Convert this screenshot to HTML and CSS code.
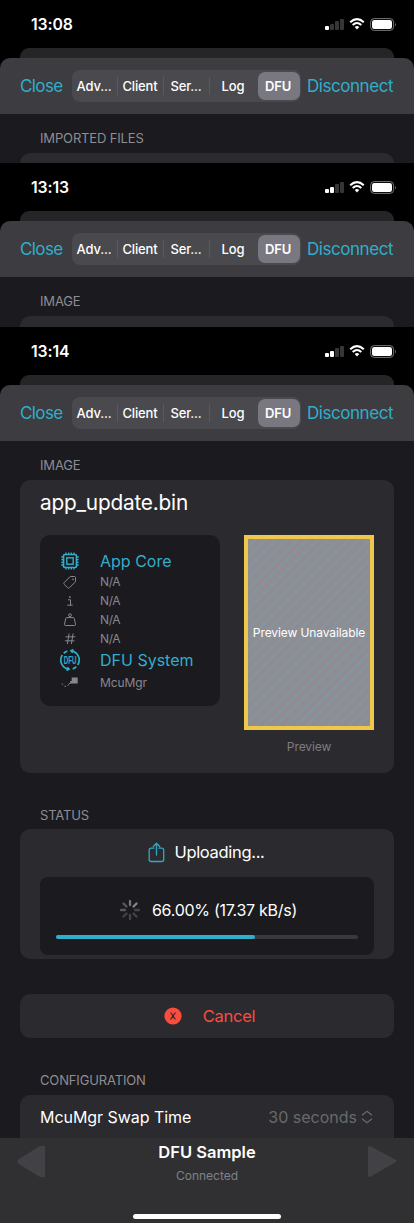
FILE: index.html
```html
<!DOCTYPE html>
<html lang="en">
<head>
<meta charset="utf-8">
<title>DFU Sample</title>
<link rel="stylesheet" href="styles.css">
</head>
<body>
<svg class="defs" width="0" height="0">
  <symbol id="wifi" viewBox="0 0 16 12"><g fill="none" stroke="#fff" stroke-width="2.1"><path d="M1.2 4.3Q8-2 14.8 4.3"/><path d="M3.7 7Q8 3 12.3 7"/></g><path d="M5.7 9Q8 7.2 10.3 9L8 11.5Z" fill="#fff"/></symbol>
  <symbol id="battery" viewBox="0 0 27 13"><rect x=".6" y=".6" width="23" height="11.8" rx="3.6" fill="none" stroke="#777"/><rect x="2" y="2" width="20" height="9" rx="2.3" fill="#fff"/><path d="M25 4.5q1.6 2 0 4z" fill="#777"/></symbol>
</svg>
<main class="page">
  <section class="phone short first">
    <header class="status"><time>13:08</time><div class="indicators"><span class="bars"><i class="on"></i><i></i><i></i><i></i></span><svg class="wifi"><use href="#wifi"/></svg><svg class="battery"><use href="#battery"/></svg></div></header>
    <div class="backsheet"></div>
    <nav class="nav"><a class="close">Close</a><div class="segments"><span>Adv...</span><span>Client</span><span>Ser...</span><span>Log</span><span class="selected">DFU</span></div><a class="disconnect">Disconnect</a></nav>
    <h2 class="label imported">IMPORTED FILES</h2>
    <div class="card peek"></div>
  </section>
  <section class="phone short second">
    <header class="status"><time>13:13</time><div class="indicators"><span class="bars"><i class="on"></i><i class="on"></i><i></i><i></i></span><svg class="wifi"><use href="#wifi"/></svg><svg class="battery"><use href="#battery"/></svg></div></header>
    <div class="backsheet"></div>
    <nav class="nav"><a class="close">Close</a><div class="segments"><span>Adv...</span><span>Client</span><span>Ser...</span><span>Log</span><span class="selected">DFU</span></div><a class="disconnect">Disconnect</a></nav>
    <h2 class="label">IMAGE</h2>
    <div class="card peek"></div>
  </section>
  <section class="phone full">
    <header class="status"><time>13:14</time><div class="indicators"><span class="bars"><i class="on"></i><i class="on"></i><i></i><i></i></span><svg class="wifi"><use href="#wifi"/></svg><svg class="battery"><use href="#battery"/></svg></div></header>
    <div class="backsheet"></div>
    <nav class="nav"><a class="close">Close</a><div class="segments"><span>Adv...</span><span>Client</span><span>Ser...</span><span>Log</span><span class="selected">DFU</span></div><a class="disconnect">Disconnect</a></nav>
    <h2 class="label">IMAGE</h2>
    <div class="card image-card">
      <h1 class="filename">app_update.bin</h1>
      <div class="image-row">
        <ul class="details">
          <li class="major"><svg width="20" height="20" viewBox="0 0 20 20" fill="none" stroke="currentColor"><rect x="3.5" y="3.5" width="13" height="13" rx="1.5" stroke-width="1.7"/><rect x="6.8" y="6.8" width="6.4" height="6.4" stroke-width="1.4"/><path d="M6 1.5V3M8.7 1.5V3M11.3 1.5V3M14 1.5V3M6 17v1.5M8.7 17v1.5M11.3 17v1.5M14 17v1.5M1.3 6H3M1.3 8.7H3M1.3 11.3H3M1.3 14H3M17 6h1.7M17 8.7h1.7M17 11.3h1.7M17 14h1.7" stroke-width="1.3"/></svg><span class="core">App Core</span></li>
          <li><svg width="16" height="16" viewBox="0 0 16 16" fill="none" stroke="currentColor"><path d="M8.3 2.5 2.3 8.4q-1 1 0 2l3.2 3.2q1 1 2 0l6-5.8V3.500q0-1-1-1Z" stroke-linejoin="round"/><circle cx="11" cy="5.3" r=".5"/></svg><span>N/A</span></li>
          <li><svg width="16" height="16" viewBox="0 0 16 16" fill="none" stroke="currentColor"><path d="M6 6.8h2.5v5.4M5.3 12.2h5.4"/><circle cx="7.9" cy="4.1" r=".5" fill="currentColor"/></svg><span>N/A</span></li>
          <li><svg width="16" height="16" viewBox="0 0 16 16" fill="none" stroke="currentColor"><circle cx="8" cy="3.2" r="1.4"/><path d="M5 5.6h6q1 0 1.3 1l1.2 5.7q.2 1.2-1 1.2h-9q-1.2 0-1-1.2L3.7 6.6Q4 5.6 5 5.6Z"/></svg><span>N/A</span></li>
          <li><svg width="16" height="16" viewBox="0 0 16 16" fill="none" stroke="currentColor"><path d="m7.1 2.5-1.7 10.5M11.1 2.5 9.4 13M3.5 5.8h9.8M3 9.8h9.5"/></svg><span>N/A</span></li>
          <li class="major system"><svg width="22" height="22" viewBox="0 0 22 22" fill="none" stroke="currentColor" stroke-width="1.7"><path d="M12.5 1.8A9.3 9.3 0 0 1 18.7 16M17.3 17.7A9.3 9.3 0 0 1 13.7 19.9M9.5 20.2A9.3 9.3 0 0 1 3.3 6M4.7 4.3A9.3 9.3 0 0 1 8.3 2.1"/><path d="m14.5.6-2.5 1.2 1.7 2M7.5 21.4l2.5-1.2-1.7-2"/><g transform="translate(4.7 14.7) scale(.62 1)"><text class="dfu-text">DFU</text></g></svg><span class="system-name">DFU System</span></li>
          <li class="manager"><svg width="18" height="12" viewBox="0 0 18 12"><path d="M10.7.5h6v6h-7.5v-2.5h1.5z" fill="currentColor"/><path d="M1 6.5l1 1.3M3.5 9.3h1.5M6.5 8.5l1.500-1M8 6.500h1.500" fill="none" stroke="currentColor"/></svg><span class="mcumgr">McuMgr</span></li>
        </ul>
        <figure class="preview"><div class="unavailable"><span>Preview Unavailable</span></div><figcaption>Preview</figcaption></figure>
      </div>
    </div>
    <h2 class="label status-label">STATUS</h2>
    <div class="card upload-card">
      <div class="upload-title"><svg width="17" height="21" viewBox="0 0 17 21" fill="none" stroke="#31a9c5" stroke-width="1.3" stroke-linecap="round" stroke-linejoin="round"><path d="M6 6.2H3.2q-2 0-2 2v9.300q0 2 2 2h10.500q2 0 2-2V8.200q0-2-2-2H11M8.500 13V1.500M5.300 4.500l3.200-3.200 3.200 3.200"/></svg><span>Uploading...</span></div>
      <div class="progress-box">
        <div class="progress-text"><svg width="20" height="20" viewBox="-10 -10 20 20" stroke-width="2.3" stroke-linecap="round"><path d="M0-5v-4" stroke="#77777b"/><path d="m3.5-3.5 3-3" stroke="#85858a"/><path d="M5 0h4M3.5 3.5l3 3M0 5v4M-3.5 3.5l-3 3" stroke="#454549"/><path d="M-5 0h-4M-3.5-3.5l-3-3" stroke="#59595d"/></svg><span>66.00% (17.37 kB/s)</span></div>
        <div class="track"><div class="bar" style="width:66%"></div></div>
      </div>
    </div>
    <button class="card cancel"><svg width="18" height="18" viewBox="0 0 18 18"><circle cx="9" cy="9" r="8.6" fill="#fc4c40"/><path d="m6.600 5.500 4.800 7m0-7-4.800 7" stroke="#302b2e" stroke-width="1.2"/></svg><span>Cancel</span></button>
    <h2 class="label config-label">CONFIGURATION</h2>
    <div class="card config"><span class="swap">McuMgr Swap Time</span><span class="seconds">30 seconds</span><svg width="12" height="14" viewBox="0 0 12 14" fill="none" stroke="#69696d" stroke-width="1.3"><path d="m1 5.300 5-4 5 4M1 8.700l5 4 5-4"/></svg></div>
    <footer class="footer">
      <svg class="arrow" width="29" height="33" viewBox="0 0 29 33"><path d="M28 1v31h-5L2 19q-3-2.500 0-5L23 1Z" fill="#424145"/></svg>
      <div class="connection"><strong>DFU Sample</strong><small>Connected</small></div>
      <svg class="arrow" width="29" height="33" viewBox="0 0 29 33"><path d="M0 3q0-3 3-1.500l24 13q3 1.500 0 3L3 31.500q-3 1.500-3-1Z" fill="#424145"/></svg>
      <div class="home"></div>
    </footer>
  </section>
</main>
</body>
</html>
```
FILE: styles.css
```css
* { box-sizing: border-box; }
html, body { margin: 0; background: #fff; }
body { height: 1227px; overflow: hidden; font-family: Inter, Roboto, sans-serif; color: #fff; }
h1, h2, ul, figure { margin: 0; padding: 0; font-weight: 400; }
.defs { display: block; }
.page { width: 414px; height: 1223px; overflow: hidden; }
.phone { display: flex; flex-direction: column; overflow: hidden; background: linear-gradient(#000 70px, #1b1a1e 70px); }
.first { height: 163px; }
.second { height: 164px; }
.full { height: 896px; }
.phone > * { flex-shrink: 0; }
.status { height: 48px; padding: 0 17px 0 31px; display: flex; align-items: center; justify-content: space-between; }
.status time { font-size: 15.8px; font-weight: 600; letter-spacing: -.1px; }
.indicators { display: flex; align-items: center; gap: 5px; }
.bars { display: flex; align-items: flex-end; gap: 1px; height: 12px; }
.bars i { width: 4px; height: 4px; border-radius: 1px; background: #363636; }
.bars i:nth-child(2) { height: 6px; }
.bars i:nth-child(3) { height: 9px; }
.bars i:nth-child(4) { height: 11px; }
.bars .on { background: #fff; }
.wifi { width: 16px; height: 12px; }
.battery { width: 27px; height: 13px; }
.backsheet { height: 10px; margin: 0 20px; border-radius: 9px 9px 0 0; background: #252528; }
.nav { height: 56px; padding: 0 20px; display: flex; align-items: center; border-radius: 10px 10px 0 0; background: #3d3c40; color: #31aecb; font-size: 17px; }
.close { width: 52px; letter-spacing: -.6px; }
.disconnect { margin-left: 6px; letter-spacing: -.45px; white-space: nowrap; }
.segments { width: 229px; height: 32px; padding: 2px 1px 2px 0; display: grid; grid-template-columns: 46px 46px 46px 48px 42px; border-radius: 8px; background: #4a494e; color: #fff; }
.segments span { display: flex; align-items: center; justify-content: center; position: relative; padding-right: 2px; font-size: 13px; font-weight: 500; letter-spacing: -.15px; }
.segments span:nth-child(-n+3)::after { content: ""; position: absolute; right: 0; width: 1px; height: 18px; background: #5a595f; }
.segments .selected { border-radius: 7px; background: #79777f; font-weight: 600; }
.label { height: 39px; padding: 17px 40px 0; color: #8e8d94; font-size: 13px; line-height: 14px; letter-spacing: -.15px; }
.card { margin: 0 20px; border-radius: 10px; background: #2b2a2e; }
.peek { height: 30px; }
.image-card { height: 293px; padding: 9px 20px 0; }
.filename { height: 46px; font-size: 20.8px; line-height: 27px; letter-spacing: -.2px; }
.image-row { display: flex; gap: 24px; }
.details { width: 180px; height: 171px; padding: 15px 20px 0; list-style: none; border-radius: 10px; background: #1b1a1e; color: #88878e; }
.details li { display: grid; grid-template-columns: 20px 1fr; align-items: center; justify-items: center; column-gap: 20px; height: 19px; font-size: 12px; letter-spacing: -.35px; }
.details li > span { justify-self: start; white-space: nowrap; }
.details .major { height: 22px; color: #31aecb; font-size: 16px; letter-spacing: 0; }
.details .system { height: 24px; }
.details .manager { height: 21px; letter-spacing: -.1px; }
.dfu-text { font: 700 10px "Liberation Sans", sans-serif; letter-spacing: 0; fill: currentColor; stroke: none; }
.preview { width: 130px; }
.unavailable { width: 130px; height: 195px; border: 4px solid #efc84b; display: flex; align-items: center; justify-content: center; background: repeating-linear-gradient(135deg, #8f8d92 0 4.4px, #8096a4 5.5px 6.2px, #8f8d92 7.3px); font-size: 12px; letter-spacing: -.1px; white-space: nowrap; }
.preview figcaption { padding-top: 9px; text-align: center; font-size: 12px; line-height: 15px; letter-spacing: -.1px; color: #7e7d83; }
.status-label { height: 56px; padding-top: 35px; }
.upload-card { height: 130px; padding: 0 20px; }
.upload-title { height: 48px; display: flex; align-items: center; justify-content: center; gap: 9px; padding: 0 1px 2px 0; font-size: 16.5px; letter-spacing: -.32px; }
.progress-box { height: 78px; padding: 21px 16px 0; border-radius: 8px; background: #1b1a1e; }
.progress-text { height: 24px; display: flex; align-items: center; justify-content: center; gap: 12px; padding-left: 3px; font-size: 16px; letter-spacing: -.27px; }
.track { margin-top: 13px; height: 4px; border-radius: 2px; background: #39383d; }
.bar { height: 4px; border-radius: 2px; background: #2cb0cd; }
.cancel { height: 44px; margin-top: 35px; border: 0; display: flex; align-items: center; justify-content: center; gap: 21px; padding: 0 0 0 5px; color: #fc4c40; font: 16.5px Inter, sans-serif; letter-spacing: -.3px; }
.config-label { height: 57px; padding-top: 35px; }
.config { height: 43px; padding: 0 21px 0 20px; display: flex; align-items: center; border-radius: 10px 10px 0 0; font-size: 16px; }
.swap { letter-spacing: -.05px; }
.config svg { margin-left: 4px; }
.seconds { margin-left: auto; color: #69696d; }
.footer { height: 85px; padding: 7px 17px 0; display: grid; grid-template-columns: 29px 1fr 29px; align-items: start; background: #303032; }
.connection { display: flex; flex-direction: column; align-items: center; }
.connection strong { font-size: 16.5px; font-weight: 600; line-height: 15px; }
.connection small { margin-top: 8px; font-size: 12px; line-height: 15px; color: #7d8289; }
.home { grid-column: 2; justify-self: center; width: 148px; height: 5px; margin-top: 26px; border-radius: 3px; background: #fff; }
```
